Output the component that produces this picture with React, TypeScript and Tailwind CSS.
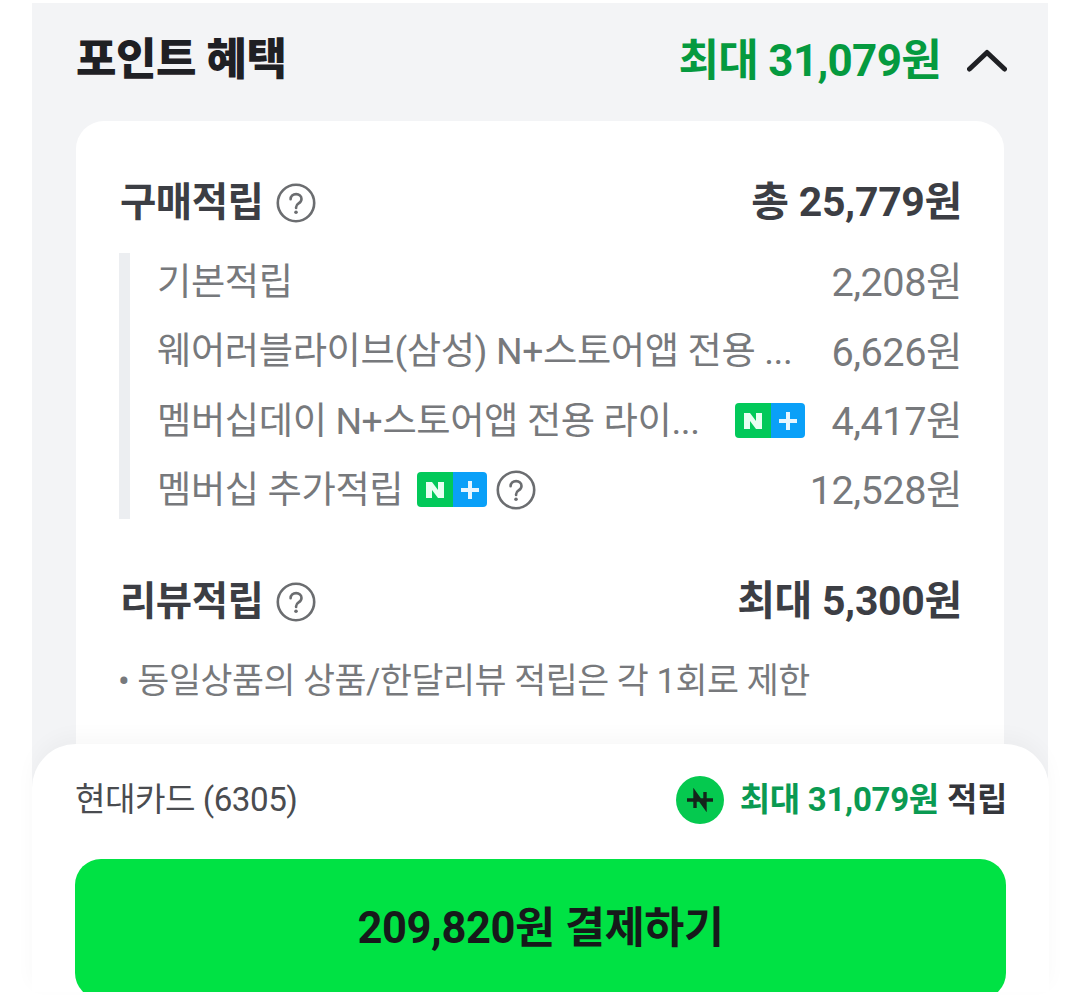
const font = { fontFamily: 'Roboto, "Noto Sans CJK KR", sans-serif' };

function HelpIcon() {
  return (
    <svg width="40" height="40" viewBox="0 0 40 40" fill="none" className="shrink-0">
      <circle cx="20" cy="20" r="18.2" stroke="#6b6d70" strokeWidth="2.6" />
      <path
        d="M14.6 16.2c0-3 2.4-5.1 5.5-5.1s5.4 1.9 5.4 4.8c0 2.2-1.2 3.4-2.9 4.5-1.6 1-2.5 1.9-2.5 3.8v.8"
        stroke="#6b6d70"
        strokeWidth="2.6"
        strokeLinecap="round"
      />
      <circle cx="20" cy="29.2" r="1.8" fill="#6b6d70" />
    </svg>
  );
}

function NPlusBadge() {
  return (
    <span className="flex h-[35px] w-[70px] shrink-0 overflow-hidden rounded-[4px]">
      <span className="flex w-[36px] items-center justify-center bg-[#02c95a]">
        <svg width="20" height="18" viewBox="0 0 20 18">
          <path d="M1 1h6l6 8V1h6v16h-6L7 9v8H1z" fill="#e8fff2" />
        </svg>
      </span>
      <span className="flex flex-1 items-center justify-center bg-[#0aa0f8]">
        <svg width="20" height="20" viewBox="0 0 20 20">
          <path d="M8 1h4v7h7v4h-7v7H8v-7H1V8h7z" fill="#e6f6ff" />
        </svg>
      </span>
    </span>
  );
}

function DetailRow({ children, amount }: { children: React.ReactNode; amount: string }) {
  return (
    <div className="flex h-[58px] items-center justify-between">
      <div className="flex items-center text-[37.300px] tracking-[-0.4px] text-[#77797c]">{children}</div>
      <span className="pt-[2px] text-[39.700px] tracking-[-0.5px] text-[#77797c]">{amount}</span>
    </div>
  );
}

export default function App() {
  return (
    <div className="h-[999px] overflow-hidden bg-white px-[32px] pt-[3px]" style={font}>
      <div className="h-[800px] bg-[#f3f4f6] px-[44px]">
        <div className="flex h-[118px] items-center justify-between pb-[4px]">
          <h1 className="text-[44px] leading-none font-black tracking-[-0.5px] text-[#1f2024]">포인트 혜택</h1>
          <div className="flex items-center pt-[2px]">
            <span className="text-[44px] leading-none font-bold tracking-[-0.7px] text-[#059a3f]">최대 31,079원</span>
            <svg width="40" height="24" viewBox="0 0 40 24" fill="none" className="ml-[26px] -mr-[3px]">
              <path d="M2.500 20 20 3.500 37.500 20" stroke="#1f2024" strokeWidth="5" strokeLinecap="round" strokeLinejoin="round" />
            </svg>
          </div>
        </div>

        <div className="h-[660px] rounded-[28px] bg-white pr-[42px] pl-[44px] pt-[57px]">
          <div className="flex h-[50px] items-center justify-between font-bold text-[#3c3e44]">
            <div className="flex items-center gap-[13px] text-[39.500px] tracking-[-0.5px]">
              <span>구매적립</span>
              <HelpIcon />
            </div>
            <span className="text-[41px] tracking-[-0.3px]">총 25,779원</span>
          </div>

          <div className="mt-[25px] -ml-[1px] flex flex-col gap-[11.330px] border-l-[11px] border-[#eceef1] pl-[27px]">
            <DetailRow amount="2,208원">
              <span className="pt-[2px]">기본적립</span>
            </DetailRow>
            <DetailRow amount="6,626원">
              <span className="pt-[2px]">웨어러블라이브(삼성) N+스토어앱 전용 ...</span>
            </DetailRow>
            <DetailRow amount="4,417원">
              <span className="w-[578px] pt-[2px]">멤버십데이 N+스토어앱 전용 라이...</span>
              <NPlusBadge />
            </DetailRow>
            <DetailRow amount="12,528원">
              <span className="pt-[2px]">멤버십 추가적립</span>
              <span className="ml-[14px]">
                <NPlusBadge />
              </span>
              <span className="ml-[9px]">
                <HelpIcon />
              </span>
            </DetailRow>
          </div>

          <div className="mt-[58px] flex h-[50px] items-center justify-between font-bold text-[#3c3e44]">
            <div className="flex items-center gap-[13px] text-[39.500px] tracking-[-0.5px]">
              <span>리뷰적립</span>
              <HelpIcon />
            </div>
            <span className="text-[41px] tracking-[-0.3px]">최대 5,300원</span>
          </div>
          <p className="mt-[29px] -ml-[2px] text-[34.800px] leading-[50px] tracking-[-0.5px] text-[#77797c]">• 동일상품의 상품/한달리뷰 적립은 각 1회로 제한</p>
        </div>
      </div>

      <div className="relative -mt-[59px] h-[248px] w-[1017px] overflow-hidden rounded-t-[44px] bg-white px-[43px] shadow-[0_-8px_20px_rgba(0,0,0,0.03)]">
        <div className="flex h-[115px] items-center justify-between pb-[3px]">
          <span className="text-[33.200px] tracking-[-0.5px] text-[#4a4c50]">현대카드 (6305)</span>
          <div className="-mr-[1px] flex items-center text-[33px] font-bold tracking-[-0.3px]">
            <span className="flex h-[48px] w-[48px] items-center justify-center rounded-full bg-[#05c94f]">
              <svg width="30" height="24" viewBox="0 0 30 24" fill="none" stroke="#14251b" strokeWidth="3.4">
                <path d="M10 20V5l10 14V4M2 12h26" />
              </svg>
            </span>
            <span className="ml-[16px] text-[#0a9a52]">최대 31,079원</span>
            <span className="ml-[8px] text-[#34363b]">적립</span>
          </div>
        </div>
        <div className="flex h-[140px] w-[931px] items-center justify-center rounded-[26px] bg-[#00e244] text-[43.500px] font-bold tracking-[-0.4px] text-[#16191a]">
          209,820원 결제하기
        </div>
      </div>
    </div>
  );
}
